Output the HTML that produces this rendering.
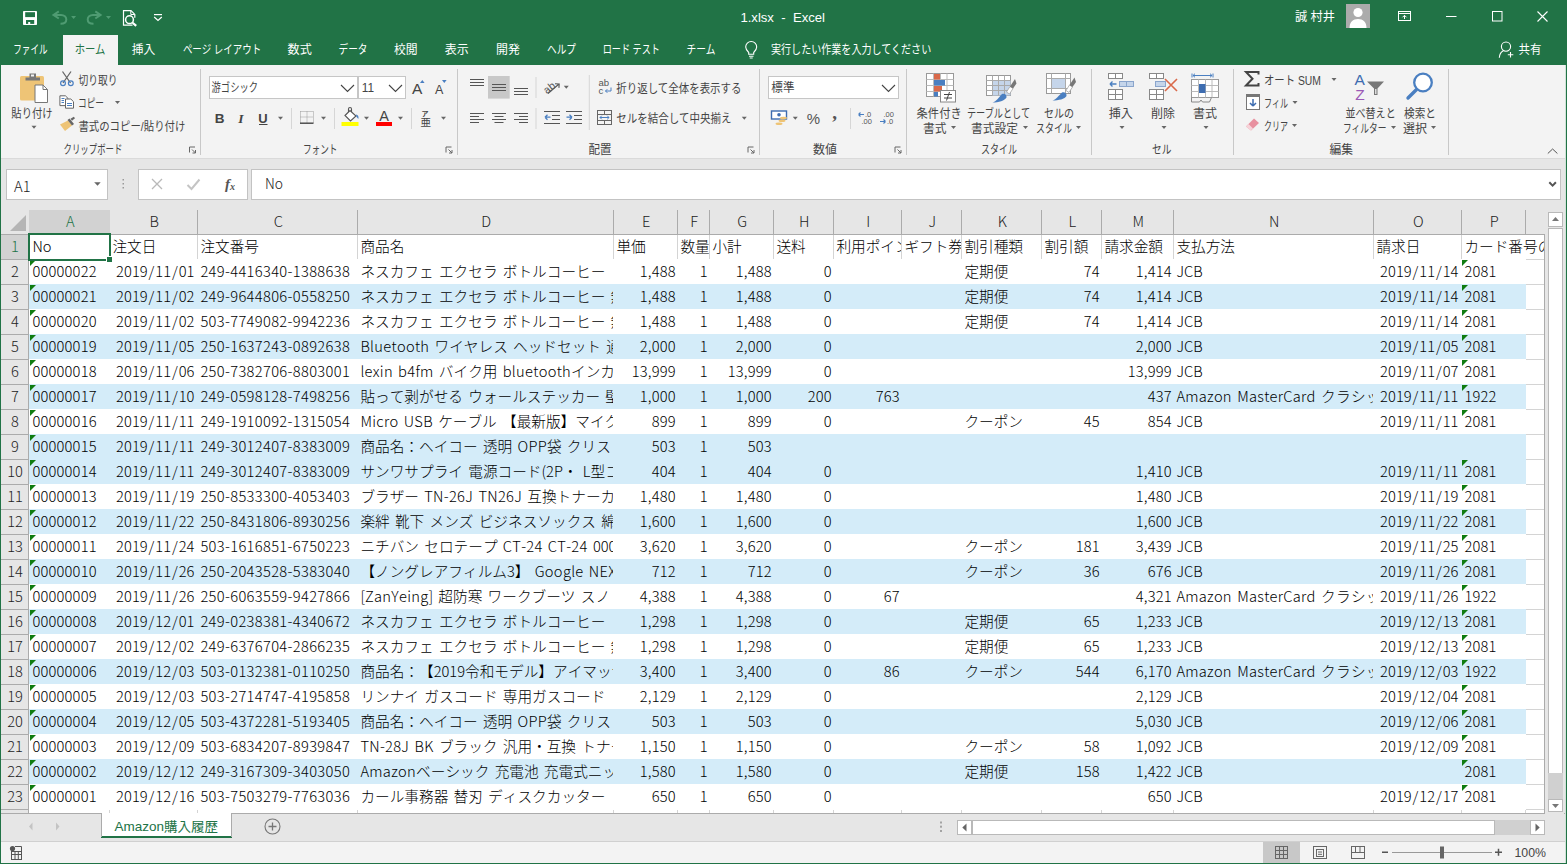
<!DOCTYPE html><html lang="ja"><head><meta charset="utf-8"><title>1.xlsx - Excel</title><style>

html,body{margin:0;padding:0}
body{width:1567px;height:864px;overflow:hidden;background:#e6e6e6;position:relative;font-family:"Liberation Sans","Noto Sans CJK JP",sans-serif;color:#000}
svg{position:absolute;left:0;top:0}
svg text{font-family:"Liberation Sans","Noto Sans CJK JP",sans-serif}
.g{position:absolute;left:0;top:0;width:1567px;height:864px}
.r{position:absolute;left:29px;width:1497px;height:25px}
.c{position:absolute;top:0;height:25px;line-height:23px;font-size:14.67px;font-weight:300;font-family:"Noto Sans CJK JP","Liberation Sans",sans-serif;white-space:pre;overflow:hidden;box-sizing:border-box;padding:0 1.2px 0 3.4px;color:#000;text-spacing-trim:space-all;font-kerning:none}
.j{word-spacing:2px}
.l{letter-spacing:0.3px}
.n{text-align:right}
.k{letter-spacing:0.2px}
.o{letter-spacing:0.35px}
.m{letter-spacing:0.25px}
.d{letter-spacing:0.05px;padding-right:2.5px}
.s{margin:0 0.9px}
.h{position:absolute;top:210px;height:24px;line-height:22px;font-size:14.67px;font-weight:300;font-family:"Noto Sans CJK JP","Liberation Sans",sans-serif;text-align:center;color:#222;border-right:1px solid #ababab;box-sizing:border-box;padding-left:1.5px}
.rh{position:absolute;left:1px;width:26px;padding-left:1px;height:24px;line-height:21px;font-size:14.67px;font-weight:300;font-family:"Noto Sans CJK JP","Liberation Sans",sans-serif;text-align:center;color:#222;border-bottom:1px solid #ababab;border-right:1px solid #ababab}
.t{position:absolute;left:1px;top:1px;width:0;height:0;border-top:6px solid #107c10;border-right:6px solid transparent}

</style></head><body>
<div class="g"><div style="position:absolute;left:29px;top:234px;width:1515px;height:579px;background:#fff"></div>
<div class="h" style="left:29px;width:81px;padding-left:2.5px;background:#d2d2d2;color:#217346;border-right-color:#d2d2d2;">A</div>
<div class="h" style="left:110px;width:88px;">B</div>
<div class="h" style="left:198px;width:160px;">C</div>
<div class="h" style="left:358px;width:256px;">D</div>
<div class="h" style="left:614px;width:64px;">E</div>
<div class="h" style="left:678px;width:32px;">F</div>
<div class="h" style="left:710px;width:64px;">G</div>
<div class="h" style="left:774px;width:60px;">H</div>
<div class="h" style="left:834px;width:68px;">I</div>
<div class="h" style="left:902px;width:60px;">J</div>
<div class="h" style="left:962px;width:80px;">K</div>
<div class="h" style="left:1042px;width:60px;">L</div>
<div class="h" style="left:1102px;width:72px;">M</div>
<div class="h" style="left:1174px;width:200px;">N</div>
<div class="h" style="left:1374px;width:88px;">O</div>
<div class="h" style="left:1462px;width:64px;">P</div>
<div class="h" style="left:1526px;width:19px;border-right:0"></div>
<div style="position:absolute;left:1px;top:234px;width:1544px;height:1px;background:#ababab"></div>
<div class="rh" style="top:235px;background:#d2d2d2;color:#217346;">1</div>
<div class="rh" style="top:260px;">2</div>
<div class="rh" style="top:285px;">3</div>
<div class="rh" style="top:310px;">4</div>
<div class="rh" style="top:335px;">5</div>
<div class="rh" style="top:360px;">6</div>
<div class="rh" style="top:385px;">7</div>
<div class="rh" style="top:410px;">8</div>
<div class="rh" style="top:435px;">9</div>
<div class="rh" style="top:460px;">10</div>
<div class="rh" style="top:485px;">11</div>
<div class="rh" style="top:510px;">12</div>
<div class="rh" style="top:535px;">13</div>
<div class="rh" style="top:560px;">14</div>
<div class="rh" style="top:585px;">15</div>
<div class="rh" style="top:610px;">16</div>
<div class="rh" style="top:635px;">17</div>
<div class="rh" style="top:660px;">18</div>
<div class="rh" style="top:685px;">19</div>
<div class="rh" style="top:710px;">20</div>
<div class="rh" style="top:735px;">21</div>
<div class="rh" style="top:760px;">22</div>
<div class="rh" style="top:785px;">23</div>
<div class="rh" style="top:810px;height:3px;border-bottom:0;"></div>
<div class="r" style="top:234px;width:1515px;"><div class="c j" style="left:0px;width:80px;">No</div><div class="c j" style="left:80px;width:88px;">注文日</div><div class="c j" style="left:168px;width:160px;">注文番号</div><div class="c j" style="left:328px;width:256px;">商品名</div><div class="c j" style="left:584px;width:64px;">単価</div><div class="c j" style="left:648px;width:32px;">数量</div><div class="c j" style="left:680px;width:64px;">小計</div><div class="c j" style="left:744px;width:60px;">送料</div><div class="c j" style="left:804px;width:68px;">利用ポイント</div><div class="c j" style="left:872px;width:60px;">ギフト券</div><div class="c j" style="left:932px;width:80px;">割引種類</div><div class="c j" style="left:1012px;width:60px;">割引額</div><div class="c j" style="left:1072px;width:72px;">請求金額</div><div class="c j" style="left:1144px;width:200px;">支払方法</div><div class="c j" style="left:1344px;width:88px;">請求日</div><div class="c j" style="left:1432px;width:83px;">カード番号の下4桁</div></div>
<div class="r" style="top:259px;background:#fff;"><div class="c k" style="left:0px;width:80px;"><i class="t"></i>00000022</div><div class="c n d" style="left:80px;width:88px;">2019<span class="s">/</span>11<span class="s">/</span>01</div><div class="c o" style="left:168px;width:160px;">249-4416340-1388638</div><div class="c j" style="left:328px;width:256px;">ネスカフェ エクセラ ボトルコーヒー  甘さひかえめ 900<span class="l">ml</span>×12本</div><div class="c n k" style="left:584px;width:64px;">1,488</div><div class="c n k" style="left:648px;width:32px;">1</div><div class="c n k" style="left:680px;width:64px;">1,488</div><div class="c n k" style="left:744px;width:60px;">0</div><div class="c j" style="left:932px;width:80px;">定期便</div><div class="c n k" style="left:1012px;width:60px;">74</div><div class="c n k" style="left:1072px;width:72px;">1,414</div><div class="c j" style="left:1144px;width:200px;">JCB</div><div class="c n d" style="left:1344px;width:88px;">2019<span class="s">/</span>11<span class="s">/</span>14</div><div class="c k" style="left:1432px;width:64px;"><i class="t"></i>2081</div></div>
<div class="r" style="top:284px;background:#d4ecf9;"><div class="c k" style="left:0px;width:80px;"><i class="t"></i>00000021</div><div class="c n d" style="left:80px;width:88px;">2019<span class="s">/</span>11<span class="s">/</span>02</div><div class="c o" style="left:168px;width:160px;">249-9644806-0558250</div><div class="c j" style="left:328px;width:256px;">ネスカフェ エクセラ ボトルコーヒー 無糖 900<span class="l">ml</span>×12本</div><div class="c n k" style="left:584px;width:64px;">1,488</div><div class="c n k" style="left:648px;width:32px;">1</div><div class="c n k" style="left:680px;width:64px;">1,488</div><div class="c n k" style="left:744px;width:60px;">0</div><div class="c j" style="left:932px;width:80px;">定期便</div><div class="c n k" style="left:1012px;width:60px;">74</div><div class="c n k" style="left:1072px;width:72px;">1,414</div><div class="c j" style="left:1144px;width:200px;">JCB</div><div class="c n d" style="left:1344px;width:88px;">2019<span class="s">/</span>11<span class="s">/</span>14</div><div class="c k" style="left:1432px;width:64px;"><i class="t"></i>2081</div></div>
<div class="r" style="top:309px;background:#fff;"><div class="c k" style="left:0px;width:80px;"><i class="t"></i>00000020</div><div class="c n d" style="left:80px;width:88px;">2019<span class="s">/</span>11<span class="s">/</span>02</div><div class="c o" style="left:168px;width:160px;">503-7749082-9942236</div><div class="c j" style="left:328px;width:256px;">ネスカフェ エクセラ ボトルコーヒー 無糖 900<span class="l">ml</span>×12本</div><div class="c n k" style="left:584px;width:64px;">1,488</div><div class="c n k" style="left:648px;width:32px;">1</div><div class="c n k" style="left:680px;width:64px;">1,488</div><div class="c n k" style="left:744px;width:60px;">0</div><div class="c j" style="left:932px;width:80px;">定期便</div><div class="c n k" style="left:1012px;width:60px;">74</div><div class="c n k" style="left:1072px;width:72px;">1,414</div><div class="c j" style="left:1144px;width:200px;">JCB</div><div class="c n d" style="left:1344px;width:88px;">2019<span class="s">/</span>11<span class="s">/</span>14</div><div class="c k" style="left:1432px;width:64px;"><i class="t"></i>2081</div></div>
<div class="r" style="top:334px;background:#d4ecf9;"><div class="c k" style="left:0px;width:80px;"><i class="t"></i>00000019</div><div class="c n d" style="left:80px;width:88px;">2019<span class="s">/</span>11<span class="s">/</span>05</div><div class="c o" style="left:168px;width:160px;">250-1637243-0892638</div><div class="c j" style="left:328px;width:256px;"><span class="l">Bluetooth</span> ワイヤレス ヘッドセット 通話 片耳</div><div class="c n k" style="left:584px;width:64px;">2,000</div><div class="c n k" style="left:648px;width:32px;">1</div><div class="c n k" style="left:680px;width:64px;">2,000</div><div class="c n k" style="left:744px;width:60px;">0</div><div class="c n k" style="left:1072px;width:72px;">2,000</div><div class="c j" style="left:1144px;width:200px;">JCB</div><div class="c n d" style="left:1344px;width:88px;">2019<span class="s">/</span>11<span class="s">/</span>05</div><div class="c k" style="left:1432px;width:64px;"><i class="t"></i>2081</div></div>
<div class="r" style="top:359px;background:#fff;"><div class="c k" style="left:0px;width:80px;"><i class="t"></i>00000018</div><div class="c n d" style="left:80px;width:88px;">2019<span class="s">/</span>11<span class="s">/</span>06</div><div class="c o" style="left:168px;width:160px;">250-7382706-8803001</div><div class="c j" style="left:328px;width:256px;"><span class="l">lexin</span> <span class="l">b4fm</span> バイク用 <span class="l">bluetooth</span>インカム 4人同時通話</div><div class="c n k" style="left:584px;width:64px;">13,999</div><div class="c n k" style="left:648px;width:32px;">1</div><div class="c n k" style="left:680px;width:64px;">13,999</div><div class="c n k" style="left:744px;width:60px;">0</div><div class="c n k" style="left:1072px;width:72px;">13,999</div><div class="c j" style="left:1144px;width:200px;">JCB</div><div class="c n d" style="left:1344px;width:88px;">2019<span class="s">/</span>11<span class="s">/</span>07</div><div class="c k" style="left:1432px;width:64px;"><i class="t"></i>2081</div></div>
<div class="r" style="top:384px;background:#d4ecf9;"><div class="c k" style="left:0px;width:80px;"><i class="t"></i>00000017</div><div class="c n d" style="left:80px;width:88px;">2019<span class="s">/</span>11<span class="s">/</span>10</div><div class="c o" style="left:168px;width:160px;">249-0598128-7498256</div><div class="c j" style="left:328px;width:256px;">貼って剥がせる ウォールステッカー 壁紙シール</div><div class="c n k" style="left:584px;width:64px;">1,000</div><div class="c n k" style="left:648px;width:32px;">1</div><div class="c n k" style="left:680px;width:64px;">1,000</div><div class="c n k" style="left:744px;width:60px;">200</div><div class="c n k" style="left:804px;width:68px;">763</div><div class="c n k" style="left:1072px;width:72px;">437</div><div class="c j m" style="left:1144px;width:200px;">Amazon MasterCard クラシック</div><div class="c n d" style="left:1344px;width:88px;">2019<span class="s">/</span>11<span class="s">/</span>11</div><div class="c k" style="left:1432px;width:64px;"><i class="t"></i>1922</div></div>
<div class="r" style="top:409px;background:#fff;"><div class="c k" style="left:0px;width:80px;"><i class="t"></i>00000016</div><div class="c n d" style="left:80px;width:88px;">2019<span class="s">/</span>11<span class="s">/</span>11</div><div class="c o" style="left:168px;width:160px;">249-1910092-1315054</div><div class="c j" style="left:328px;width:256px;"><span class="l">Micro</span> <span class="l">USB</span> ケーブル 【最新版】マイクロ <span class="l">USB</span> 充電</div><div class="c n k" style="left:584px;width:64px;">899</div><div class="c n k" style="left:648px;width:32px;">1</div><div class="c n k" style="left:680px;width:64px;">899</div><div class="c n k" style="left:744px;width:60px;">0</div><div class="c j" style="left:932px;width:80px;">クーポン</div><div class="c n k" style="left:1012px;width:60px;">45</div><div class="c n k" style="left:1072px;width:72px;">854</div><div class="c j" style="left:1144px;width:200px;">JCB</div><div class="c n d" style="left:1344px;width:88px;">2019<span class="s">/</span>11<span class="s">/</span>11</div><div class="c k" style="left:1432px;width:64px;"><i class="t"></i>2081</div></div>
<div class="r" style="top:434px;background:#d4ecf9;"><div class="c k" style="left:0px;width:80px;"><i class="t"></i>00000015</div><div class="c n d" style="left:80px;width:88px;">2019<span class="s">/</span>11<span class="s">/</span>11</div><div class="c o" style="left:168px;width:160px;">249-3012407-8383009</div><div class="c j" style="left:328px;width:256px;">商品名：ヘイコー 透明 <span class="l">OPP</span>袋 クリス</div><div class="c n k" style="left:584px;width:64px;">503</div><div class="c n k" style="left:648px;width:32px;">1</div><div class="c n k" style="left:680px;width:64px;">503</div></div>
<div class="r" style="top:459px;background:#d4ecf9;"><div class="c k" style="left:0px;width:80px;"><i class="t"></i>00000014</div><div class="c n d" style="left:80px;width:88px;">2019<span class="s">/</span>11<span class="s">/</span>11</div><div class="c o" style="left:168px;width:160px;">249-3012407-8383009</div><div class="c j" style="left:328px;width:256px;">サンワサプライ 電源コード(2P・ L型コネクタ) 1m</div><div class="c n k" style="left:584px;width:64px;">404</div><div class="c n k" style="left:648px;width:32px;">1</div><div class="c n k" style="left:680px;width:64px;">404</div><div class="c n k" style="left:744px;width:60px;">0</div><div class="c n k" style="left:1072px;width:72px;">1,410</div><div class="c j" style="left:1144px;width:200px;">JCB</div><div class="c n d" style="left:1344px;width:88px;">2019<span class="s">/</span>11<span class="s">/</span>11</div><div class="c k" style="left:1432px;width:64px;"><i class="t"></i>2081</div></div>
<div class="r" style="top:484px;background:#fff;"><div class="c k" style="left:0px;width:80px;"><i class="t"></i>00000013</div><div class="c n d" style="left:80px;width:88px;">2019<span class="s">/</span>11<span class="s">/</span>19</div><div class="c o" style="left:168px;width:160px;">250-8533300-4053403</div><div class="c j" style="left:328px;width:256px;">ブラザー <span class="l">TN-26J</span> <span class="l">TN26J</span> 互換トナーカートリッジ</div><div class="c n k" style="left:584px;width:64px;">1,480</div><div class="c n k" style="left:648px;width:32px;">1</div><div class="c n k" style="left:680px;width:64px;">1,480</div><div class="c n k" style="left:744px;width:60px;">0</div><div class="c n k" style="left:1072px;width:72px;">1,480</div><div class="c j" style="left:1144px;width:200px;">JCB</div><div class="c n d" style="left:1344px;width:88px;">2019<span class="s">/</span>11<span class="s">/</span>19</div><div class="c k" style="left:1432px;width:64px;"><i class="t"></i>2081</div></div>
<div class="r" style="top:509px;background:#d4ecf9;"><div class="c k" style="left:0px;width:80px;"><i class="t"></i>00000012</div><div class="c n d" style="left:80px;width:88px;">2019<span class="s">/</span>11<span class="s">/</span>22</div><div class="c o" style="left:168px;width:160px;">250-8431806-8930256</div><div class="c j" style="left:328px;width:256px;">楽絆 靴下 メンズ ビジネスソックス 綿 抗菌防臭</div><div class="c n k" style="left:584px;width:64px;">1,600</div><div class="c n k" style="left:648px;width:32px;">1</div><div class="c n k" style="left:680px;width:64px;">1,600</div><div class="c n k" style="left:744px;width:60px;">0</div><div class="c n k" style="left:1072px;width:72px;">1,600</div><div class="c j" style="left:1144px;width:200px;">JCB</div><div class="c n d" style="left:1344px;width:88px;">2019<span class="s">/</span>11<span class="s">/</span>22</div><div class="c k" style="left:1432px;width:64px;"><i class="t"></i>2081</div></div>
<div class="r" style="top:534px;background:#fff;"><div class="c k" style="left:0px;width:80px;"><i class="t"></i>00000011</div><div class="c n d" style="left:80px;width:88px;">2019<span class="s">/</span>11<span class="s">/</span>24</div><div class="c o" style="left:168px;width:160px;">503-1616851-6750223</div><div class="c j" style="left:328px;width:256px;">ニチバン セロテープ <span class="l">CT-24</span> <span class="l">CT-24</span> 0000</div><div class="c n k" style="left:584px;width:64px;">3,620</div><div class="c n k" style="left:648px;width:32px;">1</div><div class="c n k" style="left:680px;width:64px;">3,620</div><div class="c n k" style="left:744px;width:60px;">0</div><div class="c j" style="left:932px;width:80px;">クーポン</div><div class="c n k" style="left:1012px;width:60px;">181</div><div class="c n k" style="left:1072px;width:72px;">3,439</div><div class="c j" style="left:1144px;width:200px;">JCB</div><div class="c n d" style="left:1344px;width:88px;">2019<span class="s">/</span>11<span class="s">/</span>25</div><div class="c k" style="left:1432px;width:64px;"><i class="t"></i>2081</div></div>
<div class="r" style="top:559px;background:#d4ecf9;"><div class="c k" style="left:0px;width:80px;"><i class="t"></i>00000010</div><div class="c n d" style="left:80px;width:88px;">2019<span class="s">/</span>11<span class="s">/</span>26</div><div class="c o" style="left:168px;width:160px;">250-2043528-5383040</div><div class="c j" style="left:328px;width:256px;">【ノングレアフィルム3】 <span class="l">Google</span> <span class="l">NEXUS</span> 用</div><div class="c n k" style="left:584px;width:64px;">712</div><div class="c n k" style="left:648px;width:32px;">1</div><div class="c n k" style="left:680px;width:64px;">712</div><div class="c n k" style="left:744px;width:60px;">0</div><div class="c j" style="left:932px;width:80px;">クーポン</div><div class="c n k" style="left:1012px;width:60px;">36</div><div class="c n k" style="left:1072px;width:72px;">676</div><div class="c j" style="left:1144px;width:200px;">JCB</div><div class="c n d" style="left:1344px;width:88px;">2019<span class="s">/</span>11<span class="s">/</span>26</div><div class="c k" style="left:1432px;width:64px;"><i class="t"></i>2081</div></div>
<div class="r" style="top:584px;background:#fff;"><div class="c k" style="left:0px;width:80px;"><i class="t"></i>00000009</div><div class="c n d" style="left:80px;width:88px;">2019<span class="s">/</span>11<span class="s">/</span>26</div><div class="c o" style="left:168px;width:160px;">250-6063559-9427866</div><div class="c j" style="left:328px;width:256px;">[<span class="l">ZanYeing</span>] 超防寒 ワークブーツ スノ</div><div class="c n k" style="left:584px;width:64px;">4,388</div><div class="c n k" style="left:648px;width:32px;">1</div><div class="c n k" style="left:680px;width:64px;">4,388</div><div class="c n k" style="left:744px;width:60px;">0</div><div class="c n k" style="left:804px;width:68px;">67</div><div class="c n k" style="left:1072px;width:72px;">4,321</div><div class="c j m" style="left:1144px;width:200px;">Amazon MasterCard クラシック</div><div class="c n d" style="left:1344px;width:88px;">2019<span class="s">/</span>11<span class="s">/</span>26</div><div class="c k" style="left:1432px;width:64px;"><i class="t"></i>1922</div></div>
<div class="r" style="top:609px;background:#d4ecf9;"><div class="c k" style="left:0px;width:80px;"><i class="t"></i>00000008</div><div class="c n d" style="left:80px;width:88px;">2019<span class="s">/</span>12<span class="s">/</span>01</div><div class="c o" style="left:168px;width:160px;">249-0238381-4340672</div><div class="c j" style="left:328px;width:256px;">ネスカフェ エクセラ ボトルコーヒー  甘さひかえめ 900<span class="l">ml</span>×12本</div><div class="c n k" style="left:584px;width:64px;">1,298</div><div class="c n k" style="left:648px;width:32px;">1</div><div class="c n k" style="left:680px;width:64px;">1,298</div><div class="c n k" style="left:744px;width:60px;">0</div><div class="c j" style="left:932px;width:80px;">定期便</div><div class="c n k" style="left:1012px;width:60px;">65</div><div class="c n k" style="left:1072px;width:72px;">1,233</div><div class="c j" style="left:1144px;width:200px;">JCB</div><div class="c n d" style="left:1344px;width:88px;">2019<span class="s">/</span>12<span class="s">/</span>13</div><div class="c k" style="left:1432px;width:64px;"><i class="t"></i>2081</div></div>
<div class="r" style="top:634px;background:#fff;"><div class="c k" style="left:0px;width:80px;"><i class="t"></i>00000007</div><div class="c n d" style="left:80px;width:88px;">2019<span class="s">/</span>12<span class="s">/</span>02</div><div class="c o" style="left:168px;width:160px;">249-6376704-2866235</div><div class="c j" style="left:328px;width:256px;">ネスカフェ エクセラ ボトルコーヒー 無糖 900<span class="l">ml</span>×12本</div><div class="c n k" style="left:584px;width:64px;">1,298</div><div class="c n k" style="left:648px;width:32px;">1</div><div class="c n k" style="left:680px;width:64px;">1,298</div><div class="c n k" style="left:744px;width:60px;">0</div><div class="c j" style="left:932px;width:80px;">定期便</div><div class="c n k" style="left:1012px;width:60px;">65</div><div class="c n k" style="left:1072px;width:72px;">1,233</div><div class="c j" style="left:1144px;width:200px;">JCB</div><div class="c n d" style="left:1344px;width:88px;">2019<span class="s">/</span>12<span class="s">/</span>13</div><div class="c k" style="left:1432px;width:64px;"><i class="t"></i>2081</div></div>
<div class="r" style="top:659px;background:#d4ecf9;"><div class="c k" style="left:0px;width:80px;"><i class="t"></i>00000006</div><div class="c n d" style="left:80px;width:88px;">2019<span class="s">/</span>12<span class="s">/</span>03</div><div class="c o" style="left:168px;width:160px;">503-0132381-0110250</div><div class="c j" style="left:328px;width:256px;">商品名：【2019令和モデル】アイマッサージャー</div><div class="c n k" style="left:584px;width:64px;">3,400</div><div class="c n k" style="left:648px;width:32px;">1</div><div class="c n k" style="left:680px;width:64px;">3,400</div><div class="c n k" style="left:744px;width:60px;">0</div><div class="c n k" style="left:804px;width:68px;">86</div><div class="c j" style="left:932px;width:80px;">クーポン</div><div class="c n k" style="left:1012px;width:60px;">544</div><div class="c n k" style="left:1072px;width:72px;">6,170</div><div class="c j m" style="left:1144px;width:200px;">Amazon MasterCard クラシック</div><div class="c n d" style="left:1344px;width:88px;">2019<span class="s">/</span>12<span class="s">/</span>03</div><div class="c k" style="left:1432px;width:64px;"><i class="t"></i>1922</div></div>
<div class="r" style="top:684px;background:#fff;"><div class="c k" style="left:0px;width:80px;"><i class="t"></i>00000005</div><div class="c n d" style="left:80px;width:88px;">2019<span class="s">/</span>12<span class="s">/</span>03</div><div class="c o" style="left:168px;width:160px;">503-2714747-4195858</div><div class="c j" style="left:328px;width:256px;">リンナイ ガスコード 専用ガスコード</div><div class="c n k" style="left:584px;width:64px;">2,129</div><div class="c n k" style="left:648px;width:32px;">1</div><div class="c n k" style="left:680px;width:64px;">2,129</div><div class="c n k" style="left:744px;width:60px;">0</div><div class="c n k" style="left:1072px;width:72px;">2,129</div><div class="c j" style="left:1144px;width:200px;">JCB</div><div class="c n d" style="left:1344px;width:88px;">2019<span class="s">/</span>12<span class="s">/</span>04</div><div class="c k" style="left:1432px;width:64px;"><i class="t"></i>2081</div></div>
<div class="r" style="top:709px;background:#d4ecf9;"><div class="c k" style="left:0px;width:80px;"><i class="t"></i>00000004</div><div class="c n d" style="left:80px;width:88px;">2019<span class="s">/</span>12<span class="s">/</span>05</div><div class="c o" style="left:168px;width:160px;">503-4372281-5193405</div><div class="c j" style="left:328px;width:256px;">商品名：ヘイコー 透明 <span class="l">OPP</span>袋 クリス</div><div class="c n k" style="left:584px;width:64px;">503</div><div class="c n k" style="left:648px;width:32px;">1</div><div class="c n k" style="left:680px;width:64px;">503</div><div class="c n k" style="left:744px;width:60px;">0</div><div class="c n k" style="left:1072px;width:72px;">5,030</div><div class="c j" style="left:1144px;width:200px;">JCB</div><div class="c n d" style="left:1344px;width:88px;">2019<span class="s">/</span>12<span class="s">/</span>06</div><div class="c k" style="left:1432px;width:64px;"><i class="t"></i>2081</div></div>
<div class="r" style="top:734px;background:#fff;"><div class="c k" style="left:0px;width:80px;"><i class="t"></i>00000003</div><div class="c n d" style="left:80px;width:88px;">2019<span class="s">/</span>12<span class="s">/</span>09</div><div class="c o" style="left:168px;width:160px;">503-6834207-8939847</div><div class="c j" style="left:328px;width:256px;"><span class="l">TN-28J</span> <span class="l">BK</span> ブラック 汎用・互換 トナーカートリッジ</div><div class="c n k" style="left:584px;width:64px;">1,150</div><div class="c n k" style="left:648px;width:32px;">1</div><div class="c n k" style="left:680px;width:64px;">1,150</div><div class="c n k" style="left:744px;width:60px;">0</div><div class="c j" style="left:932px;width:80px;">クーポン</div><div class="c n k" style="left:1012px;width:60px;">58</div><div class="c n k" style="left:1072px;width:72px;">1,092</div><div class="c j" style="left:1144px;width:200px;">JCB</div><div class="c n d" style="left:1344px;width:88px;">2019<span class="s">/</span>12<span class="s">/</span>09</div><div class="c k" style="left:1432px;width:64px;"><i class="t"></i>2081</div></div>
<div class="r" style="top:759px;background:#d4ecf9;"><div class="c k" style="left:0px;width:80px;"><i class="t"></i>00000002</div><div class="c n d" style="left:80px;width:88px;">2019<span class="s">/</span>12<span class="s">/</span>12</div><div class="c o" style="left:168px;width:160px;">249-3167309-3403050</div><div class="c j" style="left:328px;width:256px;"><span class="l">Amazon</span>ベーシック 充電池 充電式ニッケル水素電池</div><div class="c n k" style="left:584px;width:64px;">1,580</div><div class="c n k" style="left:648px;width:32px;">1</div><div class="c n k" style="left:680px;width:64px;">1,580</div><div class="c n k" style="left:744px;width:60px;">0</div><div class="c j" style="left:932px;width:80px;">定期便</div><div class="c n k" style="left:1012px;width:60px;">158</div><div class="c n k" style="left:1072px;width:72px;">1,422</div><div class="c j" style="left:1144px;width:200px;">JCB</div><div class="c k" style="left:1432px;width:64px;"><i class="t"></i>2081</div></div>
<div class="r" style="top:784px;background:#fff;"><div class="c k" style="left:0px;width:80px;"><i class="t"></i>00000001</div><div class="c n d" style="left:80px;width:88px;">2019<span class="s">/</span>12<span class="s">/</span>16</div><div class="c o" style="left:168px;width:160px;">503-7503279-7763036</div><div class="c j" style="left:328px;width:256px;">カール事務器 替刃 ディスクカッター</div><div class="c n k" style="left:584px;width:64px;">650</div><div class="c n k" style="left:648px;width:32px;">1</div><div class="c n k" style="left:680px;width:64px;">650</div><div class="c n k" style="left:744px;width:60px;">0</div><div class="c n k" style="left:1072px;width:72px;">650</div><div class="c j" style="left:1144px;width:200px;">JCB</div><div class="c n d" style="left:1344px;width:88px;">2019<span class="s">/</span>12<span class="s">/</span>17</div><div class="c k" style="left:1432px;width:64px;"><i class="t"></i>2081</div></div>
<div style="position:absolute;left:109px;top:235px;width:1px;height:24px;background:#d4d4d4"></div>
<div style="position:absolute;left:109px;top:810px;width:1px;height:3px;background:#d4d4d4"></div>
<div style="position:absolute;left:197px;top:235px;width:1px;height:24px;background:#d4d4d4"></div>
<div style="position:absolute;left:197px;top:810px;width:1px;height:3px;background:#d4d4d4"></div>
<div style="position:absolute;left:357px;top:235px;width:1px;height:24px;background:#d4d4d4"></div>
<div style="position:absolute;left:357px;top:810px;width:1px;height:3px;background:#d4d4d4"></div>
<div style="position:absolute;left:613px;top:235px;width:1px;height:24px;background:#d4d4d4"></div>
<div style="position:absolute;left:613px;top:810px;width:1px;height:3px;background:#d4d4d4"></div>
<div style="position:absolute;left:677px;top:235px;width:1px;height:24px;background:#d4d4d4"></div>
<div style="position:absolute;left:677px;top:810px;width:1px;height:3px;background:#d4d4d4"></div>
<div style="position:absolute;left:709px;top:235px;width:1px;height:24px;background:#d4d4d4"></div>
<div style="position:absolute;left:709px;top:810px;width:1px;height:3px;background:#d4d4d4"></div>
<div style="position:absolute;left:773px;top:235px;width:1px;height:24px;background:#d4d4d4"></div>
<div style="position:absolute;left:773px;top:810px;width:1px;height:3px;background:#d4d4d4"></div>
<div style="position:absolute;left:833px;top:235px;width:1px;height:24px;background:#d4d4d4"></div>
<div style="position:absolute;left:833px;top:810px;width:1px;height:3px;background:#d4d4d4"></div>
<div style="position:absolute;left:901px;top:235px;width:1px;height:24px;background:#d4d4d4"></div>
<div style="position:absolute;left:901px;top:810px;width:1px;height:3px;background:#d4d4d4"></div>
<div style="position:absolute;left:961px;top:235px;width:1px;height:24px;background:#d4d4d4"></div>
<div style="position:absolute;left:961px;top:810px;width:1px;height:3px;background:#d4d4d4"></div>
<div style="position:absolute;left:1041px;top:235px;width:1px;height:24px;background:#d4d4d4"></div>
<div style="position:absolute;left:1041px;top:810px;width:1px;height:3px;background:#d4d4d4"></div>
<div style="position:absolute;left:1101px;top:235px;width:1px;height:24px;background:#d4d4d4"></div>
<div style="position:absolute;left:1101px;top:810px;width:1px;height:3px;background:#d4d4d4"></div>
<div style="position:absolute;left:1173px;top:235px;width:1px;height:24px;background:#d4d4d4"></div>
<div style="position:absolute;left:1173px;top:810px;width:1px;height:3px;background:#d4d4d4"></div>
<div style="position:absolute;left:1373px;top:235px;width:1px;height:24px;background:#d4d4d4"></div>
<div style="position:absolute;left:1373px;top:810px;width:1px;height:3px;background:#d4d4d4"></div>
<div style="position:absolute;left:1461px;top:235px;width:1px;height:24px;background:#d4d4d4"></div>
<div style="position:absolute;left:1461px;top:810px;width:1px;height:3px;background:#d4d4d4"></div>
<div style="position:absolute;left:1525px;top:810px;width:1px;height:3px;background:#d4d4d4"></div>
<div style="position:absolute;left:1526px;top:259px;width:18px;height:1px;background:#d4d4d4"></div>
<div style="position:absolute;left:1526px;top:284px;width:18px;height:1px;background:#d4d4d4"></div>
<div style="position:absolute;left:1526px;top:309px;width:18px;height:1px;background:#d4d4d4"></div>
<div style="position:absolute;left:1526px;top:334px;width:18px;height:1px;background:#d4d4d4"></div>
<div style="position:absolute;left:1526px;top:359px;width:18px;height:1px;background:#d4d4d4"></div>
<div style="position:absolute;left:1526px;top:384px;width:18px;height:1px;background:#d4d4d4"></div>
<div style="position:absolute;left:1526px;top:409px;width:18px;height:1px;background:#d4d4d4"></div>
<div style="position:absolute;left:1526px;top:434px;width:18px;height:1px;background:#d4d4d4"></div>
<div style="position:absolute;left:1526px;top:459px;width:18px;height:1px;background:#d4d4d4"></div>
<div style="position:absolute;left:1526px;top:484px;width:18px;height:1px;background:#d4d4d4"></div>
<div style="position:absolute;left:1526px;top:509px;width:18px;height:1px;background:#d4d4d4"></div>
<div style="position:absolute;left:1526px;top:534px;width:18px;height:1px;background:#d4d4d4"></div>
<div style="position:absolute;left:1526px;top:559px;width:18px;height:1px;background:#d4d4d4"></div>
<div style="position:absolute;left:1526px;top:584px;width:18px;height:1px;background:#d4d4d4"></div>
<div style="position:absolute;left:1526px;top:609px;width:18px;height:1px;background:#d4d4d4"></div>
<div style="position:absolute;left:1526px;top:634px;width:18px;height:1px;background:#d4d4d4"></div>
<div style="position:absolute;left:1526px;top:659px;width:18px;height:1px;background:#d4d4d4"></div>
<div style="position:absolute;left:1526px;top:684px;width:18px;height:1px;background:#d4d4d4"></div>
<div style="position:absolute;left:1526px;top:709px;width:18px;height:1px;background:#d4d4d4"></div>
<div style="position:absolute;left:1526px;top:734px;width:18px;height:1px;background:#d4d4d4"></div>
<div style="position:absolute;left:1526px;top:759px;width:18px;height:1px;background:#d4d4d4"></div>
<div style="position:absolute;left:1526px;top:784px;width:18px;height:1px;background:#d4d4d4"></div>
<div style="position:absolute;left:1526px;top:809px;width:18px;height:1px;background:#d4d4d4"></div>
<div style="position:absolute;left:28px;top:233px;width:79px;height:24px;border:2px solid #217346"></div>
<div style="position:absolute;left:106px;top:256px;width:5px;height:5px;background:#217346;border:1px solid #fff"></div>
<div style="position:absolute;left:1544px;top:234px;width:1px;height:579px;background:#ababab"></div>
<div style="position:absolute;left:1px;top:813px;width:1564px;height:1px;background:#ababab"></div></div>
<svg width="1567" height="864" viewBox="0 0 1567 864">
<rect x="0" y="0" width="1567" height="65" fill="#217346"/>
<rect x="1" y="65" width="1564" height="93" fill="#f3f3f3"/>
<rect x="1" y="158" width="1564" height="1" fill="#dadada"/>
<rect x="0" y="65" width="1" height="799" fill="#217346"/>
<rect x="1565" y="65" width="1" height="799" fill="#cfe2d7"/><rect x="1566" y="65" width="1" height="799" fill="#217346"/>
<rect x="0" y="863" width="1567" height="1" fill="#217346"/>
<rect x="63" y="35" width="55" height="30" fill="#f3f3f3"/>
<rect x="23" y="11" width="14" height="14" rx="0.8" fill="#fff"/><rect x="25.2" y="12.2" width="9.8" height="4.9" fill="#217346"/><rect x="26" y="20" width="8.2" height="3.9" fill="#217346"/><rect x="28.2" y="22" width="2" height="2" fill="#fff"/>
<g fill="none" stroke="#4f9b72" stroke-width="2" stroke-linejoin="miter">
<path d="M58.8 11.3l-5.3 3.6 5.3 3.6"/><path d="M54.5 14.9h6.5c3.2 0 5.3 2 5.3 4.6 0 2.8-2.6 4.3-5.8 4.3"/>
<path d="M95.3 11.3l5.3 3.6-5.3 3.6"/><path d="M99.5 14.9h-6.5c-3.2 0-5.3 2-5.3 4.6 0 2.8 2.6 4.3 5.8 4.3"/>
</g>
<path d="M71.1 16 h5 l-2.5 3 z" fill="#4f9b72"/>
<path d="M106 16 h5 l-2.5 3 z" fill="#4f9b72"/>
<g fill="none" stroke="#fff" stroke-width="1.2"><path d="M132.5 25.2h-9v-14.6h7.5l3.8 3.8v3.3"/><path d="M130.8 10.8v3.7h3.7" stroke-width="1"/><circle cx="129.5" cy="19.7" r="3.9" stroke-width="1.5"/><path d="M132.6 22.7l3.6 3.2" stroke-width="2.2"/></g>
<path d="M154 14.6h8" stroke="#fff" stroke-width="1.2"/><path d="M154.2 17l3.8 3.5 3.8-3.5" fill="none" stroke="#fff" stroke-width="1.2"/>
<text x="740.4" y="21.8" font-size="12.5" fill="#fff" textLength="84.6" lengthAdjust="spacingAndGlyphs" xml:space="preserve">1.xlsx  -  Excel</text>
<text x="1295" y="20.7" font-size="12" fill="#fff" textLength="40" lengthAdjust="spacingAndGlyphs" >誠 村井</text>
<rect x="1346" y="4" width="24" height="24" fill="#ababab"/><circle cx="1358" cy="12.5" r="4.6" fill="#fff"/><path d="M1349.5 28c0-6 3.5-9 8.5-9s8.5 3 8.5 9z" fill="#fff"/>
<g fill="none" stroke="#fff" stroke-width="1"><rect x="1398.5" y="11.5" width="12" height="9"/><path d="M1398.5 13.5h12"/><path d="M1404.5 19v-3.5m-2 1.8l2-2 2 2"/></g>
<path d="M1446 16.5h10.5" stroke="#fff" stroke-width="1"/>
<rect x="1492.5" y="11.5" width="9.5" height="9.5" fill="none" stroke="#fff" stroke-width="1"/>
<path d="M1537.5 11.5l10 10m0-10l-10 10" stroke="#fff" stroke-width="1.1" fill="none"/>
<text x="13.3" y="54.3" font-size="12" fill="#fff" textLength="34.2" lengthAdjust="spacingAndGlyphs" >ファイル</text>
<text x="74.7" y="54.3" font-size="12" fill="#217346" textLength="30.8" lengthAdjust="spacingAndGlyphs" >ホーム</text>
<text x="131.8" y="54.3" font-size="12" fill="#fff" textLength="23.5" lengthAdjust="spacingAndGlyphs" >挿入</text>
<text x="182.9" y="54.3" font-size="12" fill="#fff" textLength="78.3" lengthAdjust="spacingAndGlyphs" >ページ レイアウト</text>
<text x="287.6" y="54.3" font-size="12" fill="#fff" textLength="24.2" lengthAdjust="spacingAndGlyphs" >数式</text>
<text x="338.5" y="54.3" font-size="12" fill="#fff" textLength="28.9" lengthAdjust="spacingAndGlyphs" >データ</text>
<text x="394" y="54.3" font-size="12" fill="#fff" textLength="23.6" lengthAdjust="spacingAndGlyphs" >校閲</text>
<text x="444.8" y="54.3" font-size="12" fill="#fff" textLength="24" lengthAdjust="spacingAndGlyphs" >表示</text>
<text x="496" y="54.3" font-size="12" fill="#fff" textLength="23.8" lengthAdjust="spacingAndGlyphs" >開発</text>
<text x="547" y="54.3" font-size="12" fill="#fff" textLength="29" lengthAdjust="spacingAndGlyphs" >ヘルプ</text>
<text x="602.7" y="54.3" font-size="12" fill="#fff" textLength="57.3" lengthAdjust="spacingAndGlyphs" >ロード テスト</text>
<text x="686.6" y="54.3" font-size="12" fill="#fff" textLength="28.9" lengthAdjust="spacingAndGlyphs" >チーム</text>
<text x="771" y="54.3" font-size="12" fill="#fff" textLength="160.2" lengthAdjust="spacingAndGlyphs" >実行したい作業を入力してください</text>
<g fill="none" stroke="#fff" stroke-width="1.1"><path d="M748.7 52.5c-1.5-1.5-3-3-3-5.5a5.5 5.5 0 0 1 11 0c0 2.5-1.5 4-3 5.5v1.8h-5z"/><path d="M749 56.3h4.5m-3.8 1.7h3"/></g>
<g fill="none" stroke="#fff" stroke-width="1.1"><circle cx="1506" cy="46.6" r="4.6"/><path d="M1499.3 57.8c.3-4 2-6 4-7"/><path d="M1510.5 52v5.5m-2.7-2.7h5.5"/></g>
<text x="1518.6" y="53.7" font-size="12" fill="#fff" textLength="22.9" lengthAdjust="spacingAndGlyphs" >共有</text>
<rect x="200" y="69" width="1" height="86" fill="#c8c8c8"/>
<rect x="457" y="69" width="1" height="86" fill="#c8c8c8"/>
<rect x="759" y="69" width="1" height="86" fill="#c8c8c8"/>
<rect x="906" y="69" width="1" height="86" fill="#c8c8c8"/>
<rect x="1091" y="69" width="1" height="86" fill="#c8c8c8"/>
<rect x="1233" y="69" width="1" height="86" fill="#c8c8c8"/>
<rect x="1448" y="69" width="1" height="86" fill="#c8c8c8"/>
<rect x="291" y="108" width="1" height="21" fill="#d6d6d6"/>
<rect x="334" y="108" width="1" height="21" fill="#d6d6d6"/>
<rect x="411" y="108" width="1" height="21" fill="#d6d6d6"/>
<rect x="535.5" y="77" width="1" height="21" fill="#d6d6d6"/>
<rect x="535.5" y="108" width="1" height="21" fill="#d6d6d6"/>
<rect x="588.8" y="75" width="1" height="55" fill="#d6d6d6"/>
<rect x="850" y="108" width="1" height="21" fill="#d6d6d6"/>
<text x="63.5" y="153.9" font-size="12" fill="#444" textLength="58.9" lengthAdjust="spacingAndGlyphs" >クリップボード</text>
<text x="303" y="153.9" font-size="12" fill="#444" textLength="34.5" lengthAdjust="spacingAndGlyphs" >フォント</text>
<text x="588.5" y="153.9" font-size="12" fill="#444" textLength="23" lengthAdjust="spacingAndGlyphs" >配置</text>
<text x="813" y="153.9" font-size="12" fill="#444" textLength="24" lengthAdjust="spacingAndGlyphs" >数値</text>
<text x="981" y="153.9" font-size="12" fill="#444" textLength="36" lengthAdjust="spacingAndGlyphs" >スタイル</text>
<text x="1152" y="153.9" font-size="12" fill="#444" textLength="19.5" lengthAdjust="spacingAndGlyphs" >セル</text>
<text x="1329.5" y="153.9" font-size="12" fill="#444" textLength="23.5" lengthAdjust="spacingAndGlyphs" >編集</text>
<g fill="none" stroke="#666" stroke-width="1"><path d="M189.5 152.5v-5.5h5.5"/><path d="M192 149.5l3.5 3.5m0-3v3h-3"/></g>
<g fill="none" stroke="#666" stroke-width="1"><path d="M446 152.5v-5.5h5.5"/><path d="M448.5 149.5l3.5 3.5m0-3v3h-3"/></g>
<g fill="none" stroke="#666" stroke-width="1"><path d="M748 152.5v-5.5h5.5"/><path d="M750.5 149.5l3.5 3.5m0-3v3h-3"/></g>
<g fill="none" stroke="#666" stroke-width="1"><path d="M895 152.5v-5.5h5.5"/><path d="M897.5 149.5l3.5 3.5m0-3v3h-3"/></g>
<path d="M1547.8 153.5l4.8-4.5 4.8 4.5" fill="none" stroke="#555" stroke-width="1"/>
<rect x="20" y="76" width="24" height="24.5" rx="1.5" fill="#eec476"/><path d="M25.5 80.5v-3h4v-4h6.5v4h4v3z" fill="#777"/><rect x="31" y="74.5" width="3" height="2" fill="#f3f3f3"/>
<path d="M35 85h8l4.5 4.5v13h-12.5z" fill="#fff" stroke="#777" stroke-width="1"/><path d="M43 85v4.5h4.5" fill="none" stroke="#777" stroke-width="1"/>
<text x="11.3" y="117.7" font-size="12" fill="#444" textLength="41.4" lengthAdjust="spacingAndGlyphs" >貼り付け</text>
<path d="M31.5 125.7 h5 l-2.5 3 z" fill="#666"/>
<g fill="none" stroke="#666" stroke-width="1.3"><path d="M62.5 71.5l8 11.5m0.5-11.5l-8 11.5"/></g><g fill="none" stroke="#4a7fc1" stroke-width="1.2"><circle cx="63" cy="83.3" r="2.4"/><circle cx="70.8" cy="83.3" r="2.4"/></g>
<text x="78.4" y="85.1" font-size="12" fill="#444" textLength="39" lengthAdjust="spacingAndGlyphs" >切り取り</text>
<g fill="#fff" stroke="#666" stroke-width="1"><path d="M59.9 95.8h5.5l2.6 2.6v7.2h-8.1z"/><path d="M65.5 99h5.3l2.7 2.7v6.5h-8z"/></g><g stroke="#4a7fc1" stroke-width="1" fill="none"><path d="M67 103.5h5M67 105.5h5M61.5 98.5h3M61.5 100.5h2.5M61.5 102.5h2.5"/></g>
<text x="78" y="107.9" font-size="12" fill="#444" textLength="26" lengthAdjust="spacingAndGlyphs" >コピー</text>
<path d="M115 101.1 h5 l-2.5 3 z" fill="#666"/>
<path d="M60 124.5l8-4 4 5-7 5.5z" fill="#eec476"/><path d="M67.5 120l2-1.5 4.5 5.5-2 1.5z" fill="#666"/><path d="M70.5 118.8l3.3-2 1.2 1.5-3 2.5z" fill="#666"/>
<text x="78.4" y="130.7" font-size="12" fill="#444" textLength="107" lengthAdjust="spacingAndGlyphs" >書式のコピー/貼り付け</text>
<rect x="209.5" y="76.5" width="148" height="22" fill="#fff" stroke="#c6c6c6"/><rect x="358.5" y="76.5" width="47" height="22" fill="#fff" stroke="#c6c6c6"/>
<text x="211.6" y="91.7" font-size="12" fill="#444" textLength="46.4" lengthAdjust="spacingAndGlyphs" >游ゴシック</text>
<text x="361.7" y="92.1" font-size="12.5" fill="#444" textLength="12.3" lengthAdjust="spacingAndGlyphs" >11</text>
<path d="M341 85l6.5 6.5 6.5-6.5M389 85l6.5 6.5 6.5-6.5" fill="none" stroke="#444" stroke-width="1.1"/>
<text x="412" y="93.5" font-size="15.5" fill="#444" >A</text>
<text x="435" y="93.5" font-size="12.5" fill="#444" >A</text>
<path d="M420 83l2.3-3 2.3 3z" fill="#4a7fc1"/><path d="M442 80l2.3 3 2.3-3z" fill="#4a7fc1"/>
<text x="219.5" y="123" font-size="13.5" fill="#444" text-anchor="middle" font-weight="bold">B</text>
<text x="241" y="123" font-size="13.5" fill="#444" text-anchor="middle" font-style="italic" font-weight="bold" style="font-family:'Liberation Serif',serif">I</text>
<text x="263" y="122.5" font-size="13" fill="#444" text-anchor="middle" font-weight="bold">U</text>
<rect x="259" y="124" width="8.5" height="1" fill="#444"/>
<path d="M278 116.8 h5 l-2.5 3 z" fill="#666"/>
<path d="M321 116.8 h5 l-2.5 3 z" fill="#666"/>
<path d="M364 116.8 h5 l-2.5 3 z" fill="#666"/>
<path d="M398 116.8 h5 l-2.5 3 z" fill="#666"/>
<path d="M441 116.8 h5 l-2.5 3 z" fill="#666"/>
<g stroke="#9a9a9a" stroke-width="1" stroke-dasharray="1 1" fill="none"><path d="M300.5 111.5h12.5M300.5 111.5v11M313.5 111.5v11M307 111.5v11M300.5 117h12.5"/></g><rect x="300" y="122.5" width="13.5" height="1.4" fill="#444"/>
<rect x="341.5" y="122" width="17" height="4" fill="#ffff00"/>
<g fill="none" stroke="#555" stroke-width="1.1"><path d="M345 115.5l5-5 6 5.5-5.5 5z" fill="#fff"/><path d="M348.5 112v-3a1.5 1.5 0 0 1 3 0v3"/></g><path d="M356 114.5c2 .5 3 2 2.3 4.5l-2-2.5z" fill="#4a7fc1"/>
<rect x="376" y="122" width="16" height="4" fill="#ff0000"/>
<text x="384" y="121.3" font-size="14.5" fill="#444" text-anchor="middle" >A</text>
<text x="421.5" y="115.7" font-size="7" fill="#444" font-weight="bold">ア</text>
<text x="420.5" y="126.3" font-size="10.5" fill="#444" >亜</text>
<rect x="488" y="76" width="21.7" height="22.6" fill="#c8c8c8"/>
<rect x="470" y="79" width="14" height="1" fill="#555"/><rect x="470" y="82" width="14" height="1" fill="#555"/><rect x="470" y="85" width="14" height="1" fill="#555"/>
<rect x="492" y="84" width="14" height="1" fill="#555"/><rect x="492" y="87" width="14" height="1" fill="#555"/><rect x="492" y="90" width="14" height="1" fill="#555"/>
<rect x="514" y="88" width="14" height="1" fill="#555"/><rect x="514" y="91" width="14" height="1" fill="#555"/><rect x="514" y="94" width="14" height="1" fill="#555"/>
<rect x="470" y="113" width="14" height="1" fill="#555"/><rect x="470" y="116" width="9" height="1" fill="#555"/><rect x="470" y="119" width="14" height="1" fill="#555"/><rect x="470" y="122" width="9" height="1" fill="#555"/>
<rect x="492" y="113" width="14" height="1" fill="#555"/><rect x="494.5" y="116" width="9" height="1" fill="#555"/><rect x="492" y="119" width="14" height="1" fill="#555"/><rect x="494.5" y="122" width="9" height="1" fill="#555"/>
<rect x="514" y="113" width="14" height="1" fill="#555"/><rect x="519" y="116" width="9" height="1" fill="#555"/><rect x="514" y="119" width="14" height="1" fill="#555"/><rect x="519" y="122" width="9" height="1" fill="#555"/>
<g transform="rotate(-38 552 87)"><text x="543.5" y="89.5" font-size="10.5" fill="#555">ab</text></g><path d="M548 93.5l11-9.5m-4-.3l4.2.2-.3 4" fill="none" stroke="#555" stroke-width="1.1"/>
<path d="M563.8 85.8 h5 l-2.5 3 z" fill="#666"/>
<rect x="544" y="111" width="16" height="1" fill="#555"/><rect x="552" y="115" width="8" height="1" fill="#555"/><rect x="552" y="119" width="8" height="1" fill="#555"/><rect x="544" y="123" width="16" height="1" fill="#555"/>
<rect x="566" y="111" width="16" height="1" fill="#555"/><rect x="574" y="115" width="8" height="1" fill="#555"/><rect x="574" y="119" width="8" height="1" fill="#555"/><rect x="566" y="123" width="16" height="1" fill="#555"/>
<path d="M545 117.2h5.5m-5.5 0l2.5-2.5m-2.5 2.5l2.5 2.5" stroke="#4a7fc1" stroke-width="1.3" fill="none"/><path d="M572 117.2h-5.5m5.5 0l-2.5-2.5m2.5 2.5l-2.5 2.5" stroke="#4a7fc1" stroke-width="1.3" fill="none"/>
<text x="598.5" y="86" font-size="9.5" fill="#555" >ab</text>
<text x="598.5" y="93.5" font-size="9.5" fill="#555" >c</text>
<path d="M611 87.5v3.5h-5.5m1.8-1.8l-1.8 1.8 1.8 1.8" fill="none" stroke="#4a7fc1" stroke-width="1"/>
<text x="616.3" y="92.9" font-size="12" fill="#444" textLength="125.2" lengthAdjust="spacingAndGlyphs" >折り返して全体を表示する</text>
<g fill="none" stroke="#666" stroke-width="1"><rect x="597.5" y="110.5" width="14" height="14"/><path d="M597.5 114.5h14m-14 6h14m-7-10v4m0 6v4"/></g><path d="M600 117.5h9m-9 0l1.8-1.8m-1.8 1.8l1.8 1.8m7.2-1.8l-1.8-1.8m1.8 1.8l-1.8 1.8" stroke="#4a7fc1" stroke-width="1" fill="none"/>
<text x="616.3" y="123.3" font-size="12" fill="#444" textLength="115.2" lengthAdjust="spacingAndGlyphs" >セルを結合して中央揃え</text>
<path d="M741.8 116.8 h5 l-2.5 3 z" fill="#666"/>
<rect x="768.5" y="76.5" width="130" height="22" fill="#fff" stroke="#c6c6c6"/>
<text x="771.3" y="91.8" font-size="12" fill="#444" textLength="23.2" lengthAdjust="spacingAndGlyphs" >標準</text>
<path d="M882 85l6.5 6.5 6.5-6.5" fill="none" stroke="#444" stroke-width="1.1"/>
<rect x="771.5" y="111" width="15" height="8" fill="#fff" stroke="#3d6cb0" stroke-width="1.4"/><circle cx="779" cy="114.8" r="1.8" fill="#3d6cb0"/><ellipse cx="783.5" cy="118" rx="3.5" ry="1.3" fill="#eec476"/><ellipse cx="782" cy="120.8" rx="3.5" ry="1.3" fill="#eec476"/><ellipse cx="779" cy="123.8" rx="3.5" ry="1.3" fill="#eec476"/>
<path d="M792.8 116.8 h5 l-2.5 3 z" fill="#666"/>
<text x="813.5" y="123.5" font-size="15" fill="#555" text-anchor="middle" >%</text>
<text x="834.5" y="118.5" font-size="19" fill="#555" text-anchor="middle" font-weight="bold" style="font-family:'Liberation Serif',serif">,</text>
<text x="865" y="117.3" font-size="7.5" fill="#555" >.0</text>
<text x="861.5" y="124.3" font-size="7.5" fill="#555" >.00</text>
<text x="883.5" y="117.3" font-size="7.5" fill="#555" >.00</text>
<text x="887" y="124.3" font-size="7.5" fill="#555" >.0</text>
<path d="M864 114.5h-5.5m0 0l2-2m-2 2l2 2" stroke="#4a7fc1" stroke-width="1.1" fill="none"/><path d="M880 121.5h5.5m0 0l-2-2m2 2l-2 2" stroke="#4a7fc1" stroke-width="1.1" fill="none"/>
<g><rect x="926.5" y="73.5" width="27" height="23" fill="#fff" stroke="#999"/><path d="M926.5 79.5h27m-27 6h27m-27 6h27M933.5 73.5v23m7-23v23m6.5-23v23" stroke="#bbb" fill="none"/>
<rect x="934" y="74" width="6" height="5.5" fill="#d9694a"/><rect x="934" y="80" width="11" height="5.5" fill="#4a7fc1"/><rect x="934" y="86" width="8" height="5.5" fill="#d9694a"/><rect x="934" y="92" width="4" height="4.5" fill="#4a7fc1"/>
<rect x="940.5" y="90.5" width="15" height="11.5" fill="#fff" stroke="#888"/><path d="M944 94.5h8m-8 3.5h8m-2.5-6l-3 8.5" stroke="#444" stroke-width="1" fill="none"/></g>
<text x="916.6" y="118.3" font-size="12" fill="#444" textLength="45.1" lengthAdjust="spacingAndGlyphs" >条件付き</text>
<text x="923" y="132.5" font-size="12" fill="#444" textLength="23.5" lengthAdjust="spacingAndGlyphs" >書式</text>
<path d="M951 126 h5 l-2.5 3 z" fill="#666"/>
<rect x="986.5" y="75.5" width="24" height="20" fill="#fff" stroke="#999"/><rect x="992.5" y="80.5" width="18" height="15" fill="#c5d5ea"/><path d="M986.5 80.5h24m-24 5h24m-24 5h24M992.5 75.5v20m6-20v20m6-20v20" stroke="#aaa" fill="none"/>
<path d="M1006.5 92l3.5-5.5 3 2-3.5 5.5z" fill="#fff" stroke="#999" stroke-width=".7"/><path d="M1010 86.5l5-7.5 1.5 4.5-3.5 5z" fill="#777"/><path d="M992.5 102.5c4-1 6-5 9.5-8.5 2.5-1 5 1 4.5 3.5-1.5 3-8 5-14 5z" fill="#4a7fc1"/>
<text x="967" y="118.3" font-size="12" fill="#444" textLength="63" lengthAdjust="spacingAndGlyphs" >テーブルとして</text>
<text x="971" y="132.5" font-size="12" fill="#444" textLength="47" lengthAdjust="spacingAndGlyphs" >書式設定</text>
<path d="M1023 126 h5 l-2.5 3 z" fill="#666"/>
<rect x="1046.5" y="73.5" width="24" height="20" fill="#fff" stroke="#999"/><path d="M1046.5 78.5h24m-24 10h24M1051.5 73.5v20m14-20v20" stroke="#aaa" fill="none"/><rect x="1052" y="79" width="13" height="9" fill="#c5d5ea"/>
<path d="M1066 90.5l3.5-5.5 3 2-3.5 5.5z" fill="#fff" stroke="#999" stroke-width=".7"/><path d="M1069.5 85l5-7.5 1.5 4.5-3.5 5z" fill="#777"/><path d="M1052.5 100.5c4-1 6-5 9.5-8 2.5-1 5 1 4.5 3.5-1.5 3-8 4.5-14 4.5z" fill="#4a7fc1"/>
<text x="1044" y="118.3" font-size="12" fill="#444" textLength="30" lengthAdjust="spacingAndGlyphs" >セルの</text>
<text x="1036" y="132.5" font-size="12" fill="#444" textLength="36" lengthAdjust="spacingAndGlyphs" >スタイル</text>
<path d="M1076 126 h5 l-2.5 3 z" fill="#666"/>
<rect x="1108.5" y="73.5" width="14" height="5" fill="#fff" stroke="#888"/><path d="M1115.5 73.5v5" stroke="#888"/>
<rect x="1108.5" y="89.5" width="14" height="5" fill="#fff" stroke="#888"/><path d="M1115.5 89.5v5" stroke="#888"/>
<rect x="1108.5" y="94.5" width="14" height="5" fill="#fff" stroke="#888"/><path d="M1115.5 94.5v5" stroke="#888"/>
<rect x="1119.5" y="81.5" width="14" height="5" fill="#c5d5ea" stroke="#8aa5cc"/><path d="M1126.5 81.5v5" stroke="#8aa5cc"/><path d="M1116.5 84h-6.5m0 0l2.5-2.5m-2.5 2.5l2.5 2.5" stroke="#4a7fc1" stroke-width="1.4" fill="none"/>
<rect x="1149.5" y="73.5" width="14" height="5" fill="#fff" stroke="#888"/><path d="M1156.5 73.5v5" stroke="#888"/>
<rect x="1149.5" y="89.5" width="14" height="5" fill="#fff" stroke="#888"/><path d="M1156.5 89.5v5" stroke="#888"/>
<rect x="1149.5" y="94.5" width="14" height="5" fill="#fff" stroke="#888"/><path d="M1156.5 94.5v5" stroke="#888"/>
<rect x="1155.5" y="81.5" width="10" height="5" fill="#c5d5ea" stroke="#8aa5cc"/><path d="M1165 79l12 12m0-12l-12 12" stroke="#d9694a" stroke-width="1.6" fill="none"/>
<rect x="1191.5" y="79.5" width="27" height="18" fill="#fff" stroke="#999"/><path d="M1191.5 85.5h27m-27 6h27M1198.5 79.5v18m7-18v18m6.5-18v18" stroke="#bbb" fill="none"/><rect x="1199" y="84" width="6.5" height="9" fill="#3d6cb0"/>
<path d="M1192 73.5v4m21-4v4m-20-2h19m-19 0l2-1.8m-2 1.8l2 1.8m17-1.8l-2-1.8m2 1.8l-2 1.8" stroke="#4a7fc1" stroke-width="1" fill="none"/><path d="M1191.5 97.5v4.5h8l1.5-2 1.5 2h7l2-4.5" fill="none" stroke="#888"/>
<text x="1108.7" y="118.3" font-size="12" fill="#444" textLength="24.1" lengthAdjust="spacingAndGlyphs" >挿入</text>
<path d="M1119.5 126 h5 l-2.5 3 z" fill="#666"/>
<text x="1151" y="118.3" font-size="12" fill="#444" textLength="24" lengthAdjust="spacingAndGlyphs" >削除</text>
<path d="M1161.5 126 h5 l-2.5 3 z" fill="#666"/>
<text x="1193" y="118.3" font-size="12" fill="#444" textLength="24" lengthAdjust="spacingAndGlyphs" >書式</text>
<path d="M1203.5 126 h5 l-2.5 3 z" fill="#666"/>
<path d="M1258.5 74.5v-2.5h-12.5l6.5 6.8-6.5 6.7h12.5v-2.5" fill="none" stroke="#444" stroke-width="2"/>
<text x="1264" y="85.1" font-size="12" fill="#444" textLength="57" lengthAdjust="spacingAndGlyphs" >オート SUM</text>
<path d="M1331.5 78 h5 l-2.5 3 z" fill="#666"/>
<rect x="1246.5" y="96.5" width="13" height="13" fill="#fff" stroke="#777"/><rect x="1246" y="94" width="14" height="3" fill="#777"/><path d="M1253 99v7m0 0l-3-3m3 3l3-3" stroke="#3d6cb0" stroke-width="1.5" fill="none"/>
<text x="1264" y="107.9" font-size="12" fill="#444" textLength="24" lengthAdjust="spacingAndGlyphs" >フィル</text>
<path d="M1292.5 101 h5 l-2.5 3 z" fill="#666"/>
<path d="M1246 126.5l8-8 5 4.5-8 7.5z" fill="#e8909f"/><path d="M1246 126.5l2.5-2.5 4.5 4.5-2.3 2z" fill="#f6d3d9"/>
<text x="1264" y="130.7" font-size="12" fill="#444" textLength="24" lengthAdjust="spacingAndGlyphs" >クリア</text>
<path d="M1292 124 h5 l-2.5 3 z" fill="#666"/>
<text x="1354.5" y="85.2" font-size="15.5" fill="#3d6cb0" >A</text>
<text x="1355.3" y="100.2" font-size="15.5" fill="#9b59b6" >Z</text>
<path d="M1367 81.5h17l-6.5 7v6.5h-3.5v-6.5z" fill="#777"/><rect x="1375" y="89" width="1.5" height="5" fill="#ddd"/>
<text x="1345.5" y="118.3" font-size="12" fill="#444" textLength="50.2" lengthAdjust="spacingAndGlyphs" >並べ替えと</text>
<text x="1343" y="132.5" font-size="12" fill="#444" textLength="43.5" lengthAdjust="spacingAndGlyphs" >フィルター</text>
<path d="M1391 126 h5 l-2.5 3 z" fill="#666"/>
<circle cx="1423" cy="82.5" r="8.8" fill="#fff" stroke="#4a7fc1" stroke-width="2.3"/><path d="M1416.3 89.7l-8.3 8.3" stroke="#4a7fc1" stroke-width="3.4" stroke-linecap="round"/>
<text x="1404" y="118.3" font-size="12" fill="#444" textLength="32" lengthAdjust="spacingAndGlyphs" >検索と</text>
<text x="1403" y="132.5" font-size="12" fill="#444" textLength="24" lengthAdjust="spacingAndGlyphs" >選択</text>
<path d="M1431 126 h5 l-2.5 3 z" fill="#666"/>
<rect x="6.5" y="169.5" width="101" height="30" fill="#fff" stroke="#c3c3c3"/>
<rect x="138.5" y="169.5" width="109" height="30" fill="#fff" stroke="#c3c3c3"/>
<rect x="251.5" y="169.5" width="1309" height="30" fill="#fff" stroke="#c3c3c3"/>
<text x="14" y="191.8" font-size="14.67" fill="#222" textLength="16.5" lengthAdjust="spacingAndGlyphs" style="font-family:'Noto Sans CJK JP','Liberation Sans',sans-serif;font-weight:300">A1</text>
<path d="M94.2 182.2 h6.5 l-3.2 3.5 z" fill="#666"/>
<g fill="#999"><rect x="122.5" y="179" width="1.5" height="1.5"/><rect x="122.5" y="183" width="1.5" height="1.5"/><rect x="122.5" y="187" width="1.5" height="1.5"/></g>
<path d="M152 179l10 10m0-10l-10 10" stroke="#b9b9b9" stroke-width="1.3" fill="none"/><path d="M187.5 185l4 4 8-9.5" stroke="#c4c4c4" stroke-width="2" fill="none"/>
<text x="225" y="188.5" font-size="15" fill="#555" font-style="italic" font-weight="bold" style="font-family:'Liberation Serif',serif">f</text>
<text x="230" y="189.5" font-size="10" fill="#555" font-style="italic" font-weight="bold" style="font-family:'Liberation Serif',serif">x</text>
<text x="265" y="188.7" font-size="14.67" fill="#222" textLength="18" lengthAdjust="spacingAndGlyphs" style="font-family:'Noto Sans CJK JP','Liberation Sans',sans-serif;font-weight:300">No</text>
<path d="M1549.3 182.3l3.3 3.3 3.3-3.3" fill="none" stroke="#555" stroke-width="2"/>
<path d="M26 215v16h-16z" fill="#b5b5b5"/>
<rect x="1545" y="209" width="19" height="605" fill="#e6e6e6"/>
<rect x="1548.5" y="212.5" width="14" height="14" fill="#fff" stroke="#b9b9b9"/><path d="M1552 221l3.5-4 3.5 4z" fill="#777"/>
<rect x="1548.5" y="228.5" width="14" height="583" fill="#fff" stroke="#b9b9b9"/>
<rect x="1548" y="773" width="15" height="26" fill="#d0d0d0"/>
<rect x="1548.5" y="799.5" width="14" height="12" fill="#fff" stroke="#b9b9b9"/><path d="M1552 804l3.5 4 3.5-4z" fill="#777"/>
<rect x="1" y="814" width="1564" height="27" fill="#e6e6e6"/>
<path d="M32.5 822.5l-3.5 4 3.5 4zM56 822.5l3.5 4-3.5 4z" fill="#c3c3c3"/>
<rect x="102" y="813" width="129" height="24" fill="#fff"/><rect x="101" y="836" width="131" height="2" fill="#217346"/><rect x="101" y="814" width="1" height="23" fill="#ababab"/><rect x="231" y="814" width="1" height="23" fill="#ababab"/>
<text x="114.5" y="830.7" font-size="13" fill="#217346" textLength="103.5" lengthAdjust="spacingAndGlyphs" >Amazon購入履歴</text>
<circle cx="272.5" cy="826.5" r="7.5" fill="none" stroke="#777" stroke-width="1.1"/><path d="M268.5 826.5h8m-4-4v8" stroke="#777" stroke-width="1.3"/>
<g fill="#a3a3a3"><rect x="940" y="821.5" width="2" height="2"/><rect x="940" y="825.7" width="2" height="2"/><rect x="940" y="830" width="2" height="2"/></g>
<rect x="957.5" y="820.5" width="14" height="14" fill="#fff" stroke="#b9b9b9"/><path d="M966.5 823.5l-4.2 4 4.2 4z" fill="#666"/>
<rect x="972.5" y="820.5" width="522" height="14" fill="#fff" stroke="#b9b9b9"/>
<rect x="1495" y="820" width="35" height="15" fill="#d0d0d0"/>
<rect x="1530.5" y="820.5" width="14" height="14" fill="#fff" stroke="#b9b9b9"/><path d="M1535.5 823.5l4.2 4-4.2 4z" fill="#666"/>
<rect x="1" y="841" width="1564" height="1" fill="#d0d0d0"/><rect x="1" y="842" width="1564" height="21" fill="#f3f3f3"/>
<circle cx="12.5" cy="848.5" r="2.6" fill="#555"/><rect x="11.5" y="851.5" width="10" height="8" fill="none" stroke="#555"/><path d="M11.5 854.5h10m-6.5-3v8m3.3-8v8M15 846.5h6.5v5" stroke="#555" fill="none"/>
<rect x="1263" y="842" width="37" height="21" fill="#c8c8c8"/>
<g fill="none" stroke="#666" stroke-width="1"><rect x="1275.5" y="846.5" width="12" height="12"/><path d="M1279.5 846.5v12m4-12v12m-8-8h12m-12 4h12"/></g>
<g fill="none" stroke="#666" stroke-width="1"><rect x="1313.5" y="846.5" width="13" height="12"/><rect x="1316.5" y="849.5" width="7" height="7"/><path d="M1318 852h4m-4 2.3h4"/></g>
<g fill="none" stroke="#666" stroke-width="1"><rect x="1351.5" y="846.5" width="13" height="12"/><path d="M1355.5 846.5v6h4.5v-6m-8.5 6h13" /></g>
<rect x="1382" y="851.5" width="6" height="1.5" fill="#555"/><rect x="1392" y="852" width="100" height="1" fill="#999"/><rect x="1440" y="846.5" width="4" height="12" fill="#666"/>
<path d="M1495 852.2h7m-3.5-3.5v7" stroke="#555" stroke-width="1.5"/>
<text x="1514.5" y="856.8" font-size="12" fill="#444" textLength="31.5" lengthAdjust="spacingAndGlyphs" >100%</text>
</svg>
</body></html>
